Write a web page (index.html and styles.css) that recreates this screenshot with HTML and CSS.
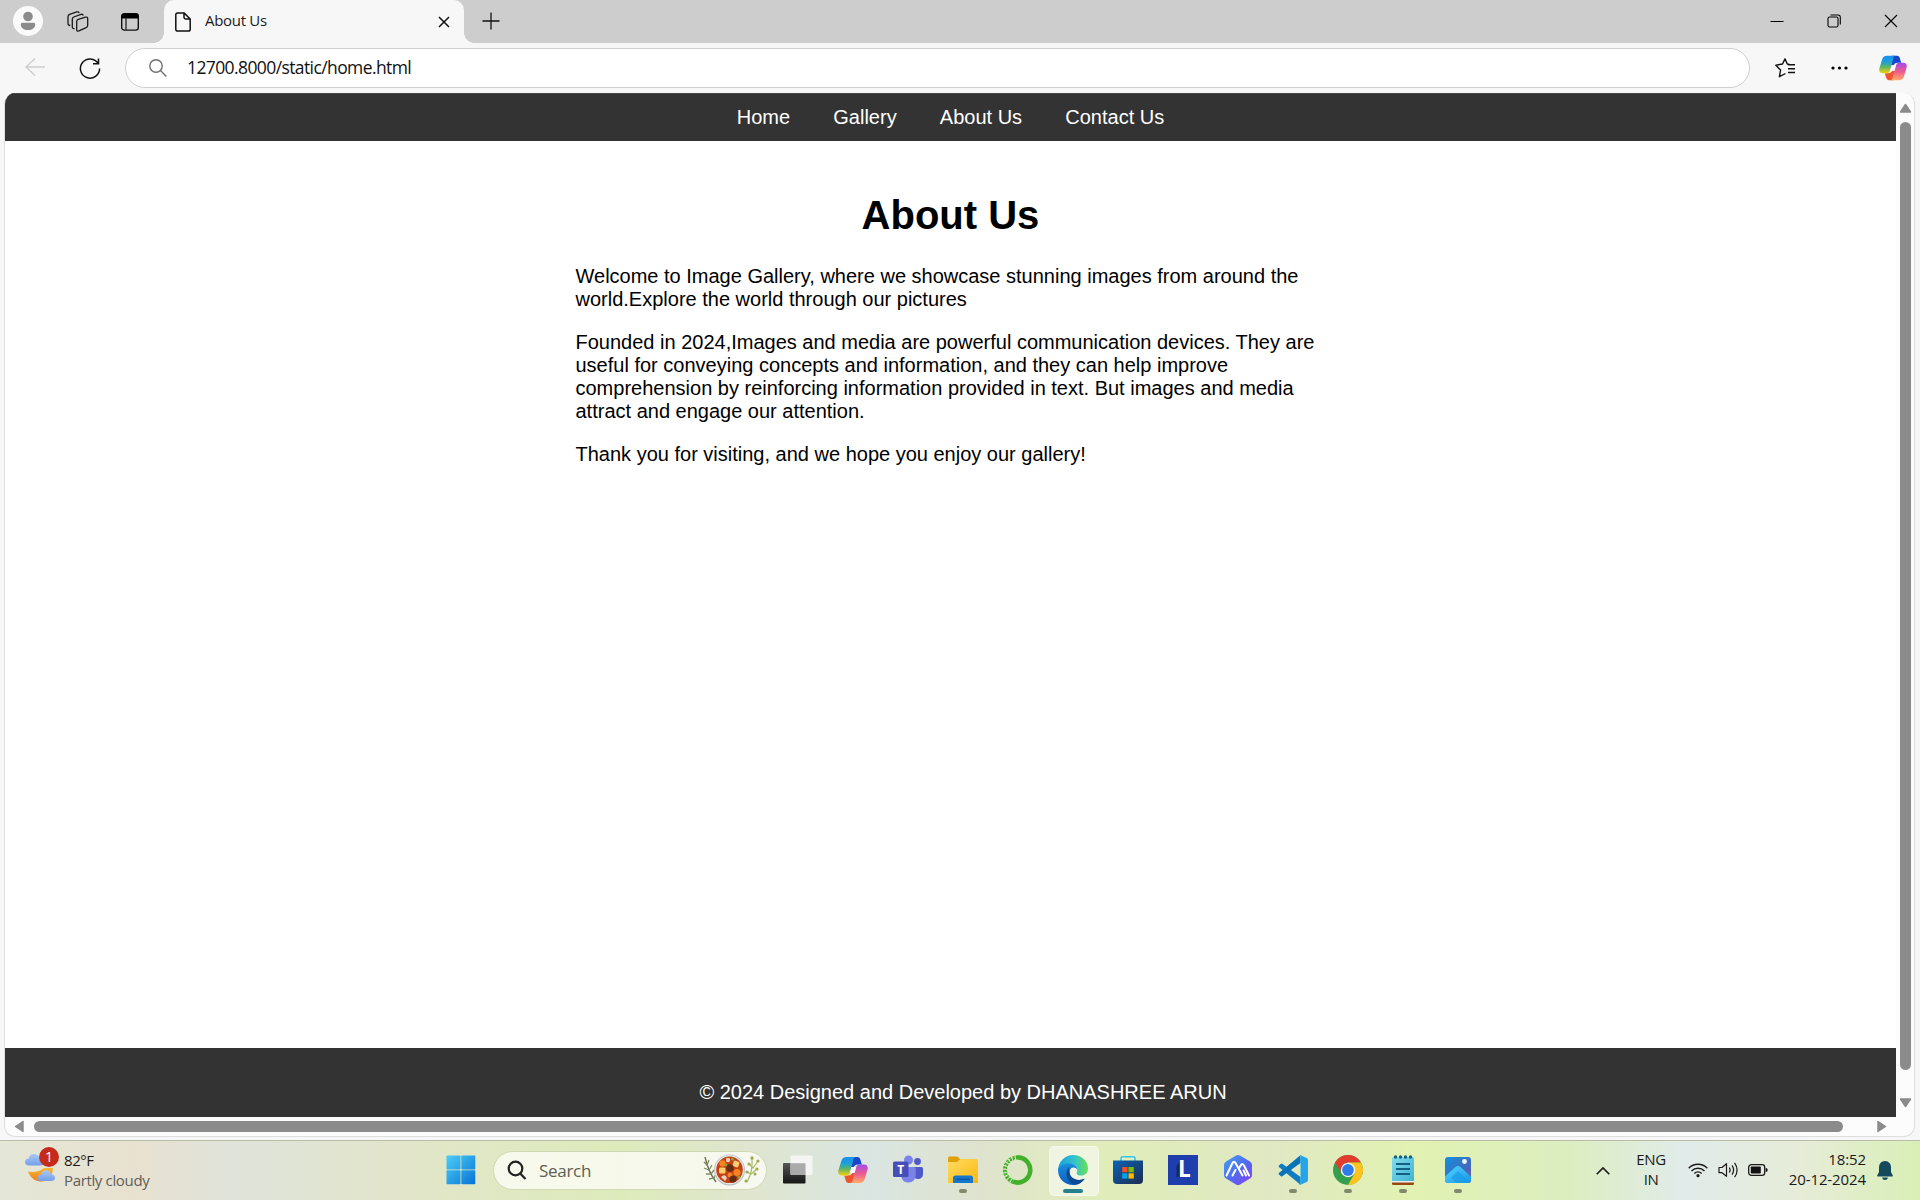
FILE: index.html
```html
<!DOCTYPE html>
<html lang="en">
<head>
<meta charset="utf-8">
<title>About Us</title>
<link rel="stylesheet" href="styles.css">
</head>
<body>
<svg width="0" height="0" class="defs">
  <defs>
    <linearGradient id="cpA" x1="0" y1="0" x2="0" y2="1"><stop offset="0" stop-color="#1b8ff0"/><stop offset=".35" stop-color="#1ba0d8"/><stop offset=".65" stop-color="#62b564"/><stop offset="1" stop-color="#f5d20a"/></linearGradient>
    <linearGradient id="cpB" x1="0" y1="0" x2="0" y2="1"><stop offset="0" stop-color="#a44bea"/><stop offset=".5" stop-color="#ee5a90"/><stop offset="1" stop-color="#ffab6b"/></linearGradient>
    <linearGradient id="win" x1="0" y1="0" x2="1" y2="1"><stop offset="0" stop-color="#4dd0fb"/><stop offset="1" stop-color="#0670d2"/></linearGradient>
    <linearGradient id="winAll" gradientUnits="userSpaceOnUse" x1="0" y1="0" x2="30" y2="30"><stop offset="0" stop-color="#4dd0fb"/><stop offset="1" stop-color="#0670d2"/></linearGradient>
    <linearGradient id="fold" x1="0" y1="0" x2="1" y2="1"><stop offset="0" stop-color="#ffdb61"/><stop offset="1" stop-color="#fcb813"/></linearGradient>
    <linearGradient id="edgeA" x1="0" y1="0" x2="1" y2="0"><stop offset="0" stop-color="#1b9fe0"/><stop offset=".55" stop-color="#34c3cd"/><stop offset="1" stop-color="#66e052"/></linearGradient>
    <linearGradient id="edgeB" x1="0" y1="0" x2="0" y2="1"><stop offset="0" stop-color="#1a8edb"/><stop offset="1" stop-color="#0b5fc0"/></linearGradient>
    <linearGradient id="store" x1="0" y1="0" x2="1" y2="1"><stop offset="0" stop-color="#0a63b5"/><stop offset="1" stop-color="#1d2c50"/></linearGradient>
    <linearGradient id="arc" x1="0" y1="0" x2="1" y2="1"><stop offset="0" stop-color="#48a4ea"/><stop offset=".5" stop-color="#4f6cf2"/><stop offset="1" stop-color="#8a3df0"/></linearGradient>
    <linearGradient id="note" x1="0" y1="0" x2="1" y2="1"><stop offset="0" stop-color="#83dcee"/><stop offset="1" stop-color="#3fb3d3"/></linearGradient>
    <linearGradient id="photo" x1="0" y1="0" x2="1" y2="1"><stop offset="0" stop-color="#1490df"/><stop offset=".6" stop-color="#3f6cbc"/><stop offset="1" stop-color="#7f4fa8"/></linearGradient>
    <linearGradient id="peak" x1="0" y1="0" x2="1" y2="1"><stop offset="0" stop-color="#4fd8ff"/><stop offset="1" stop-color="#1a93e8"/></linearGradient>
    <linearGradient id="tvA" x1="0" y1="0" x2="0" y2="1"><stop offset="0" stop-color="#555"/><stop offset="1" stop-color="#161616"/></linearGradient>
    <linearGradient id="moon" x1="0" y1="0" x2="0" y2="1"><stop offset="0" stop-color="#f7b733"/><stop offset="1" stop-color="#ee7d1c"/></linearGradient>
    <linearGradient id="cloud" x1="0" y1="0" x2="0" y2="1"><stop offset="0" stop-color="#a9c8f8"/><stop offset="1" stop-color="#739fe8"/></linearGradient>
    <symbol id="copilot" viewBox="0 0 30 30">
      <path d="M14 2h5.200c2 0 2.700 1 3.300 3l1.300 4.500h-3.500c-2.500 0-3.500.8-4.600 2.500h-3z" fill="#1848ca"/>
      <path d="M16 28h-5.200c-2 0-2.700-1-3.300-3l-1.300-4.500h3.500c2.500 0 3.500-.8 4.600-2.500h3z" fill="#ee5630"/>
      <path d="M8.500 2h9.300c-1.600.3-2.200 1.500-2.600 3l-3 11.500c-.6 2.500-1.600 4-3.900 4H4C.5 20.500-.2 18 .4 15.500L3.300 6C4.200 3.200 5.500 2 8.500 2z" fill="url(#cpA)"/>
      <path d="M21.500 28h-9.300c1.600-.3 2.200-1.500 2.600-3l3-11.500c.6-2.500 1.600-4 3.900-4H26c3.500 0 4.200 2.500 3.600 5L26.700 24c-.9 2.800-2.200 4-5.200 4z" fill="url(#cpB)"/>
      <path d="M13.500 12h4.700l-1.700 6h-4.700z" fill="#fff" opacity=".8"/>
    </symbol>
  </defs>
</svg>

<div class="browser">
  <header class="tabstrip">
    <div class="strip-tools">
      <svg class="avatar" viewBox="0 0 30 30"><circle cx="15" cy="15" r="15" fill="#fafafa"/><circle cx="15" cy="10.500" r="4.800" fill="#8b8b8b"/><path d="M7.800 18.500c0-1.200.8-1.800 1.800-1.800h10.800c1 0 1.800.6 1.800 1.800 0 3.500-3 5.500-7.200 5.500s-7.200-2-7.200-5.500z" fill="#8b8b8b"/></svg>
      <svg class="workspaces" viewBox="0 0 22 22" fill="none" stroke="#1b1b1b" stroke-width="1.300" stroke-linejoin="round"><path d="M11.200 8.400 18.600 6.200Q20.700 5.700 20.700 7.600V14.200Q20.700 16 19.200 16.600L11.900 19.900Q9.700 20.700 9.700 18.700V10.500Q9.700 8.900 11.200 8.400z"/><path d="M7.600 17.600Q5.300 18 5.300 15.700V8.300Q5.300 6.600 6.800 6L14 3.400Q15.800 2.900 16.300 4.500"/><path d="M3.300 14.500Q1 14.500 1 12.500V5.700Q1 4 2.600 3.400L9.700.9Q11.500.5 12.300 1.900"/></svg>
      <svg class="tabmenu" viewBox="0 0 18 18"><rect x=".7" y=".7" width="16.600" height="16.400" rx="2.600" fill="none" stroke="#111" stroke-width="1.400"/><path d="M.5 5.500V3Q.5.5 3 .5h12Q17.500.5 17.500 3v2.500z" fill="#000"/><path d="M5 5v12" stroke="#222" stroke-width="1.300"/></svg>
    </div>
    <div class="tab">
      <svg class="page-icon" viewBox="0 0 16 20" fill="none" stroke="#111" stroke-width="1.500" stroke-linejoin="round"><path d="M2.500.9H9L15.200 7v10.300q0 1.800-1.800 1.800H2.600Q.8 19.100.8 17.300V2.700Q.8.9 2.500.9zM9 1v4.300Q9 7 10.700 7H15"/></svg>
      <span class="tab-title">About Us</span>
      <svg class="tab-close" viewBox="0 0 12 12"><path d="M1 1l10 10M11 1 1 11" stroke="#111" stroke-width="1.500"/></svg>
    </div>
    <svg class="new-tab" viewBox="0 0 18 18"><path d="M9 .5v17M.5 9h17" stroke="#111" stroke-width="1.300"/></svg>
    <div class="win-buttons">
      <svg viewBox="0 0 14 14"><path d="M.5 7.500h13" stroke="#000"/></svg>
      <svg viewBox="0 0 14 14" fill="none" stroke="#000" stroke-width="1.100"><rect x="1" y="3" width="10" height="10" rx="1.600"/><path d="M3.500 1H11q2.300 0 2.300 2.300V10.500"/></svg>
      <svg viewBox="0 0 14 14"><path d="M1 1l12 12M13 1 1 13" stroke="#000" stroke-width="1.100"/></svg>
    </div>
  </header>

  <div class="toolbar">
    <svg class="back" viewBox="0 0 20 20" fill="none" stroke="#cecece" stroke-width="1.400"><path d="M10 1.500 1 10l9 8.500M1 10h19"/></svg>
    <svg class="reload" viewBox="0 0 22 22" fill="none" stroke="#111" stroke-width="1.500"><path d="M19.200 6.500A9.600 9.600 0 1 0 20.600 11.500M19.500 1.500v5.200H14"/></svg>
    <div class="omnibox">
      <svg class="lens" viewBox="0 0 18 18" fill="none" stroke="#6f6f6f" stroke-width="1.400"><circle cx="7" cy="7" r="6.200"/><path d="M11.500 11.500 17.300 17.500"/></svg>
      <span class="url">12700.8000/static/home.html</span>
    </div>
    <svg class="favorites" viewBox="0 0 20 20" fill="none" stroke="#111" stroke-width="1.400" stroke-linejoin="round"><path d="M14.500 6.500 12.300 6 10 .9 7.500 6 .8 7.200 5.600 12 4.400 18.700 10.500 15.500M13 6.800h7M13 10.700h7M13 14.500h7"/></svg>
    <svg class="dots" viewBox="0 0 17 4"><circle cx="2" cy="2" r="1.600"/><circle cx="8.500" cy="2" r="1.600"/><circle cx="15" cy="2" r="1.600"/></svg>
    <svg class="side-copilot"><use href="#copilot"/></svg>
  </div>

  <div class="viewport">
    <div class="document">
      <nav class="site-nav"><a>Home</a><a>Gallery</a><a>About Us</a><a>Contact Us</a></nav>
      <main class="about">
        <h1>About Us</h1>
        <p>Welcome to Image Gallery, where we showcase stunning images from around the world.Explore the world through our pictures</p>
        <p>Founded in 2024,Images and media are powerful communication devices. They are useful for conveying concepts and information, and they can help improve comprehension by reinforcing information provided in text. But images and media attract and engage our attention.</p>
        <p>Thank you for visiting, and we hope you enjoy our gallery!</p>
      </main>
      <footer class="site-footer">© 2024 Designed and Developed by DHANASHREE ARUN</footer>
    </div>
    <div class="vscroll">
      <svg width="13" height="10" viewBox="0 0 13 10"><path d="M6.500 1.500 11.500 9h-10z"/></svg>
      <i class="vthumb"></i>
      <svg width="13" height="10" viewBox="0 0 13 10"><path d="M6.500 8.500 11.500 1h-10z"/></svg>
    </div>
    <div class="hscroll">
      <svg width="10" height="13" viewBox="0 0 10 13"><path d="M1.500 6.500 9 1.500v10z"/></svg>
      <i class="hthumb"></i>
      <svg width="10" height="13" viewBox="0 0 10 13"><path d="M8.500 6.500 1 1.500v10z"/></svg>
    </div>
  </div>
</div>

<div class="taskbar">
  <div class="weather">
    <svg class="weather-icon" viewBox="0 0 34 36">
      <path d="M3 24.500c5 1 12 .5 16-3.500h9c-.5 8-5 13.500-12 13.500-6 0-11-4-13-10z" fill="url(#moon)"/>
      <path d="M4.500 18.500C1.500 18.500 0 17 0 15s1.500-3.500 3.700-3.600C4.300 8.500 6.500 7 9 7s4.500 1.500 5.300 4c3 0 5 1.500 5 4s-1.500 3.500-4 3.500z" fill="url(#cloud)"/>
      <path d="M16 34c-2.500 0-3.500-1.500-3.500-3.300s1.500-3.200 3.500-3.300c.6-2.700 2.500-4.200 5-4.200s4.300 1.500 5 4c2.500 0 4 1.500 4 3.600S28.500 34 26.500 34z" fill="url(#cloud)"/>
    </svg>
    <span class="badge">1</span>
    <div class="weather-text"><span>82°F</span><span class="muted">Partly cloudy</span></div>
  </div>

  <div class="apps">
    <div class="app start"><svg class="ico" viewBox="0 0 30 30" fill="url(#winAll)"><rect x=".5" y=".5" width="14" height="14" rx=".8"/><rect x="15.300" y=".5" width="14" height="14" rx=".8"/><rect x=".5" y="15.300" width="14" height="14" rx=".8"/><rect x="15.300" y="15.300" width="14" height="14" rx=".8"/></svg></div>
    <div class="search">
      <svg class="search-lens" viewBox="0 0 20 20" fill="none" stroke="#222" stroke-width="2.200"><circle cx="8.500" cy="8.500" r="6.800"/><path d="M13 13.200 18.500 19"/></svg>
      <span>Search</span>
      <svg class="stew" viewBox="0 0 58 32">
        <g fill="none" stroke="#7c8c62" stroke-width="1.300"><path d="M3 3Q6 17 14 28" stroke="#6c6751"/><path d="M2 8l3 3 2-5M2 14l5 2 3-5M4 20l5 0 3-4M7 25l5-1 2-4"/></g>
        <g fill="none" stroke="#a8ba67" stroke-width="1.200"><path d="M50 4Q51 18 45 28M47 10l4 4 5-7M45 18l4 2 6-5"/></g>
        <g fill="#9cab4d"><circle cx="50" cy="4" r="1.700"/><circle cx="56" cy="7" r="1.600"/><circle cx="47" cy="10" r="1.600"/><circle cx="55" cy="15" r="1.600"/><circle cx="45" cy="18" r="1.600"/><circle cx="53" cy="20" r="1.500"/><circle cx="44" cy="27" r="1.500"/></g>
        <circle cx="27.500" cy="16" r="15.500" fill="#bcc1c2"/><circle cx="27.500" cy="15.800" r="14.500" fill="#e8e9e8"/><circle cx="27.500" cy="15.800" r="13.300" fill="#c34112"/>
        <g fill="#f58220"><circle cx="20.500" cy="9.500" r="3.200"/><circle cx="35" cy="18.500" r="3.600"/><circle cx="28" cy="21" r="2.500"/></g>
        <g fill="#f7ce70"><rect x="31" y="7" width="6" height="6" rx="1.500" transform="rotate(20 34 10)"/><rect x="17" y="13.500" width="6.500" height="6" rx="1.500"/></g>
        <g fill="#652c16"><circle cx="28" cy="14" r="3.800"/><circle cx="31" cy="25" r="3.500"/></g>
        <g fill="#e7d3bd"><circle cx="26" cy="6" r="2.200"/><path d="M19 23q4-4 6 1l-2 3z"/></g>
        <g fill="#80a831"><circle cx="30.500" cy="5" r="1.600"/><circle cx="24" cy="11" r="1.400"/><circle cx="37" cy="23" r="1.600"/></g>
      </svg>
    </div>
    <div class="app"><svg class="ico" viewBox="0 0 30 30"><rect y="8" width="22.500" height="20.500" rx="1" fill="url(#tvA)"/><rect x="7.500" y=".5" width="22" height="19.500" rx="1" fill="#f5f5f5" opacity=".95"/><path d="M7.500 8.300h15V20H8.500q-1 0-1-1z" fill="#aaa"/></svg></div>
    <div class="app"><svg class="ico"><use href="#copilot"/></svg></div>
    <div class="app"><svg class="ico" viewBox="0 0 30 30"><circle cx="24.500" cy="6.500" r="3.400" fill="#5059c9"/><path d="M19 12h9.500q1.500 0 1.500 1.500V19c0 3.500-2.500 5-5 5s-5-1.500-6-4z" fill="#5059c9"/><circle cx="15.500" cy="5" r="4.500" fill="#7b83eb"/><path d="M9 12h12q1.700 0 1.700 1.700V20c0 4.500-3 7.500-7.200 7.500S8.200 25 8.200 20z" fill="#7b83eb"/><rect y="6.500" width="15.500" height="15.500" rx="1.500" fill="#464eb8"/><text x="7.700" y="18.800" class="glyph" font-size="12" text-anchor="middle">T</text></svg></div>
    <div class="app running"><svg class="ico" viewBox="0 0 30 30"><path d="M0 3Q0 1.500 1.500 1.500h8L13 5v5H0z" fill="#dea00b"/><path d="M0 7h9l3.500-3H28.500Q30 4 30 5.500V28H0z" fill="url(#fold)"/><path d="M5 28v-5q0-2.500 2.500-2.500h15Q25 20.500 25 23v5z" fill="#1676ca"/><path d="M8.500 24.300h13" stroke="#0b4d8d" stroke-width="1"/></svg></div>
    <div class="app"><svg class="ico" viewBox="0 0 30 30" fill="none" stroke="#43b02a"><path d="M15 2.400A12.600 12.600 0 1 1 10 26.700" stroke-width="4.600"/><path d="M15 2.400A12.600 12.600 0 0 0 10 26.700" stroke-width="4.200" stroke-dasharray="2.300 1"/><path d="M13 4.500A11 11 0 0 0 8 23.500M10 2A14 14 0 0 0 4 22" stroke="#e2edc5" stroke-width=".8" stroke-dasharray="2 1.500"/></svg></div>
    <div class="app running active"><svg class="ico" viewBox="0 0 30 30"><path d="M15 0C23.500 0 30 6 30 13.500 30 18 27 20.500 23 20.500c-3.500 0-5-1.500-4-3.500C20.500 14 18 9.500 12.500 9.500 6 9.500 1 13 0 16 0 7 6.500 0 15 0z" fill="url(#edgeA)"/><path d="M0 15C1 11 6 8.500 10.500 8.500c5 0 8.500 2.500 9 6.500-2.500-4-8-3-8 2.500 0 6.500 8 10 15 6C23.500 28 19.500 30 15 30 6.500 30 0 23.500 0 15z" fill="url(#edgeB)"/><path d="M11 12c-5 5-2.500 16 6 17.800 4-.3 7.500-2.500 9.900-6C19 27 12 23 11.500 17z" fill="#0c4a96"/></svg></div>
    <div class="app"><svg class="ico" viewBox="0 0 30 30"><path d="M8 7V3.500Q8 1.800 9.700 1.800h10.600Q22 1.800 22 3.500V7" fill="none" stroke="#35c5f4" stroke-width="1.600"/><path d="M0 5.500h30V25q0 4-4 4H4q-4 0-4-4z" fill="url(#store)"/><path d="M9.200 12h5.300v5.300H9.200z" fill="#f25022"/><path d="M15.500 12h5.300v5.300h-5.300z" fill="#7fba00"/><path d="M9.200 18.300h5.300v5.300H9.200z" fill="#00a4ef"/><path d="M15.500 18.300h5.300v5.300h-5.300z" fill="#ffb900"/></svg></div>
    <div class="app"><svg class="ico" viewBox="0 0 30 30"><path d="M0 0h30v30H0z" fill="#1f3eae"/><path d="M8.500 11 12 6v16h-3.500z" fill="#122a61"/><text x="10" y="22.300" class="glyph" font-size="22.500">L</text></svg></div>
    <div class="app"><svg class="ico" viewBox="0 0 30 30"><path d="M13 .6q2-1.100 4 0l10 5.800q2 1.100 2 3.400v10.400q0 2.300-2 3.400L17 29.400q-2 1.100-4 0L3 23.600q-2-1.100-2-3.400V9.800Q1 7.500 3 6.400z" fill="url(#arc)"/><path d="M3.500 20.500 9.500 8Q11 5.500 12.500 8L19.500 20.500M9.500 20.500 12.500 15M16.500 12.500 18 10Q19.500 8 21 10.500L26 20.500M20.500 15.500 23 20.500" fill="none" stroke="#fff" stroke-width="2" stroke-linecap="round" stroke-linejoin="round"/></svg></div>
    <div class="app running"><svg class="ico" viewBox="0 0 30 30"><path d="M1 10.500 3 8.700q.6-.5 1.300 0L22.500 22v7.700L.9 11.900q-.8-.7.1-1.400z" fill="#0f7cc4"/><path d="M1 19.500 3 21.300q.6.500 1.300 0L22.500 8V.3L.9 18.100q-.8.700.1 1.400z" fill="#0873b8"/><path d="M22.500.2 28.700 3Q30 3.700 30 5v20q0 1.300-1.300 2l-6.200 2.800q-1 .2-1.600-.5 1.600.5 1.600-1.300V2Q22.500.3 21 .7q.6-.7 1.500-.5z" fill="#25a5ec"/></svg></div>
    <div class="app running"><svg class="ico" viewBox="0 0 30 30"><circle cx="15" cy="15" r="15" fill="#34a04e"/><path d="M2 7.500A15 15 0 0 1 28 7.500H15L9 18.500z" fill="#e33b2e"/><path d="M15 7.500h13A15 15 0 0 1 15 30l6.500-11.300z" fill="#fcc31e"/><circle cx="15" cy="15" r="7.200" fill="#fff"/><circle cx="15" cy="15" r="5.900" fill="#2f7bea"/></svg></div>
    <div class="app running"><svg class="ico" viewBox="0 0 30 30"><path d="M4 27h22v1.500q0 1.500-1.500 1.500h-19Q4 30 4 28.500z" fill="#984713"/><path d="M4 25h22v2.500H4z" fill="#eee"/><path d="M4 3.500Q4 2 5.500 2h19Q26 2 26 3.500V26H4z" fill="url(#note)"/><g fill="#15607c"><circle cx="7.500" cy="2" r="1.700"/><circle cx="12.500" cy="2" r="1.700"/><circle cx="17.500" cy="2" r="1.700"/><circle cx="22.500" cy="2" r="1.700"/></g><path d="M8 9h14M8 14h14M8 19h14" stroke="#115f83" stroke-width="2"/></svg></div>
    <div class="app running"><svg class="ico" viewBox="0 0 30 30"><rect x="2" y="2" width="26" height="26" rx="3" fill="url(#photo)"/><path d="M2 21.500 12.500 12q2.500-2 5 0L28 21.500V25q0 3-3 3H5q-3 0-3-3z" fill="url(#peak)"/><path d="M13.500 28 8 22.500 15 16l12 11q-1 1-2 1z" fill="#169be5" opacity=".65"/><circle cx="21.500" cy="6.500" r="2.400" fill="#f2f8ff"/></svg></div>
  </div>

  <div class="tray">
    <svg class="chevron" viewBox="0 0 14 8"><path d="M.7 7.300 7 1l6.300 6.300" fill="none" stroke="#1b1b1b" stroke-width="1.600"/></svg>
    <div class="lang"><span>ENG</span><span>IN</span></div>
    <svg class="wifi" viewBox="0 0 20 16" fill="none" stroke="#1b1b1b" stroke-width="1.400"><path d="M.7 6.200a13 13 0 0 1 18.600 0M3.500 8.900a9.300 9.300 0 0 1 13 0M6.300 11.500a5.500 5.500 0 0 1 7.400 0"/><circle cx="10" cy="13.700" r="1.600" fill="#1b1b1b" stroke="none"/></svg>
    <svg class="volume" viewBox="0 0 20 16" fill="none" stroke="#1b1b1b" stroke-width="1.200" stroke-linejoin="round"><path d="M1 5.500h3L8.500 1.700v12.600L4 10.700H1zM11.300 5.500q1.700 2.500 0 5M14 3.300q3.200 4.700 0 9.400M16.600.8q5 7.200 0 14.400"/></svg>
    <svg class="battery" viewBox="0 0 20 12"><rect x=".7" y=".7" width="16" height="10.600" rx="2.600" fill="none" stroke="#1b1b1b" stroke-width="1.300"/><rect x="2.800" y="2.600" width="10" height="6.800" rx=".6" fill="#111"/><path d="M17.700 4q2 .2 2 2t-2 2z" fill="#111"/></svg>
    <div class="clock"><span>18:52</span><span>20-12-2024</span></div>
    <svg class="bell" viewBox="0 0 16 19" fill="#154a5d"><path d="M8 0q5.700.3 6 6v5l1.800 3.500q.3 1-.8 1H1q-1.100 0-.8-1L2 11V6Q2.300.3 8 0zM5 16.500h6Q10.500 19 8 19t-3-2.500z"/></svg>
  </div>
</div>
</body>
</html>
```
FILE: styles.css
```css
* { box-sizing: border-box; }
body { margin: 0; width: 1920px; height: 1200px; overflow: hidden; font-family: "Open Sans", "Noto Sans", sans-serif; color: #1b1b1b; background: #f7f7f7; }
svg { display: block; flex: none; overflow: visible; }
.defs { position: absolute; }
.browser { height: 1140px; background: #f7f7f7; display: flex; flex-direction: column; }

/* Tab strip */
.tabstrip { height: 43px; flex: none; background: #cdcdcd; display: flex; align-items: center; }
.strip-tools { width: 164px; padding-left: 13px; display: flex; align-items: center; }
.avatar { width: 30px; height: 30px; margin-top: -1px; }
.workspaces { width: 22px; height: 22px; margin-left: 24px; }
.tabmenu { width: 18px; height: 18px; margin-left: 32px; }
.tab { position: relative; width: 300px; height: 43px; background: #f7f7f7; border-radius: 10px 10px 0 0; display: flex; align-items: center; padding: 0 14px 0 11px; }
.tab::before, .tab::after { content: ""; position: absolute; bottom: 0; width: 10px; height: 10px; }
.tab::before { left: -10px; background: radial-gradient(circle at 0 0, transparent 9.500px, #f7f7f7 10px); }
.tab::after { right: -10px; background: radial-gradient(circle at 100% 0, transparent 9.500px, #f7f7f7 10px); }
.page-icon { width: 16px; height: 20px; }
.tab-title { flex: 1; margin-left: 14px; font-size: 15px; line-height: 20px; letter-spacing: -.3px; margin-top: -4px; }
.tab-close { width: 12px; height: 12px; }
.new-tab { width: 18px; height: 18px; margin-left: 18px; margin-top: -2px; }
.win-buttons { margin-left: auto; display: flex; gap: 43px; padding-right: 22px; }
.win-buttons svg { width: 14px; height: 14px; margin-top: -1px; }

/* Address bar */
.toolbar { height: 50px; flex: none; display: flex; align-items: center; padding-left: 25px; }
.back { width: 20px; height: 20px; margin-top: -2px; }
.reload { width: 22px; height: 22px; margin-left: 34px; margin-top: -1px; }
.omnibox { width: 1625px; height: 40px; margin-left: 24px; border: 1px solid #cfcfcf; border-radius: 20px; background: #fff; display: flex; align-items: center; padding-left: 23px; }
.lens { width: 18px; height: 18px; }
.url { margin-left: 20px; margin-top: -2px; font-size: 17.500px; letter-spacing: -.6px; color: #111; white-space: nowrap; }
.favorites { width: 20px; height: 20px; margin-left: 25px; }
.dots { width: 17px; height: 4px; margin-left: 36px; }
.side-copilot { width: 28px; height: 28px; margin-left: 31px; }

/* Page area with its scrollbars */
.viewport { width: 1911px; height: 1044px; margin-left: 4px; border: 1px solid #dedede; border-top: 0; border-radius: 11px; overflow: hidden; background: #fcfcfc; display: grid; grid-template-columns: 1891px 1fr; grid-template-rows: 1024px 1fr; }
.document { background: #fff; display: flex; flex-direction: column; font: 20px/23px "Liberation Sans", Arial, sans-serif; color: #000; }
.site-nav { height: 48px; flex: none; background: #333; color: #fff; display: flex; justify-content: center; align-items: center; gap: 43.200px; border-top: 1px solid #484848; }
.about { flex: 1; width: 750px; margin: 0 auto; padding-top: 52px; }
.about h1 { margin: 0 0 27px; text-align: center; font-size: 40px; line-height: 45px; }
.about p { margin: 0 0 20px; }
.site-footer { height: 69px; flex: none; background: #333; color: #fff; text-align: center; padding: 33px 0 0 25px; }
.vscroll { display: flex; flex-direction: column; align-items: center; padding-top: 10px; fill: #8b8b8b; padding-left: 1px; }
.vscroll path, .hscroll path { stroke: #8b8b8b; stroke-linejoin: round; stroke-width: 1.500px; }
.vthumb { width: 11px; height: 948px; border-radius: 6px; background: #8b8b8b; margin: 9px 0 28px; flex: none; }
.hscroll { grid-column: 1 / -1; display: flex; align-items: center; padding-left: 9px; padding-bottom: 1px; fill: #8b8b8b; }
.hthumb { width: 1809px; height: 11px; border-radius: 6px; background: #8b8b8b; margin: 0 34px 0 10px; }

/* Taskbar */
.taskbar { height: 60px; display: flex; border-top: 1px solid #b8bda8; background: linear-gradient(90deg, #e4e7d7 0, #e8e1d0 130px, #dfe3da 235px, #e2e5ca 400px, #ddebbb 620px, #dfe5cf 750px, #dae5e2 870px, #dfe3ce 980px, #e0edb9 1110px, #e0e8c3 1270px, #e2f2b2 1410px, #dceec0 1570px, #e1ebea 1685px, #e6ecd8 1800px, #d9efb6 1920px); }
.weather { position: relative; width: 433px; padding: 3px 0 0 25px; display: flex; }
.weather-icon { width: 34px; height: 36px; margin-top: 3px; }
.badge { position: absolute; left: 39px; top: 6px; width: 20px; height: 20px; border-radius: 50%; background: #c42b1c; color: #fff; font-size: 14px; line-height: 20px; text-align: center; }
.weather-text { margin-left: 5px; display: flex; flex-direction: column; font-size: 15px; line-height: 20px; padding-top: 6px; letter-spacing: -.45px; }
.weather-text .muted { color: #5f5f5a; letter-spacing: -.35px; }
.apps { display: flex; align-items: center; }
.app { width: 55px; height: 60px; display: grid; place-items: center; position: relative; margin-top: -1px; }
.start { padding-left: 1px; }
.ico { width: 30px; height: 30px; }
.running::after { content: ""; position: absolute; bottom: 7px; left: 24px; width: 8px; height: 4px; border-radius: 2px; background: #828a6c; }
.active::before { content: ""; position: absolute; left: 4px; top: 6px; width: 48px; height: 48px; border-radius: 5px; background: rgba(255,255,255,.5); border: 1px solid rgba(255,255,255,.35); }
.active .ico { position: relative; }
.active::after { left: 18px; width: 20px; background: #27808c; }
.glyph { fill: #fff; font-family: "Open Sans", sans-serif; font-weight: 700; line-height: 1; }
.search { width: 274px; height: 39px; margin: -1px 3px 0 5px; border-radius: 20px; background: rgba(252,253,246,.8); border: 1px solid #ced9b3; display: flex; align-items: center; padding-left: 13px; font-size: 17px; color: #5d5f57; }
.search-lens { width: 20px; height: 20px; margin-right: 12px; }
.search span { letter-spacing: -.3px; }
.stew { width: 58px; height: 32px; margin-left: auto; margin-right: 6px; }
.tray { margin-left: auto; display: flex; align-items: center; padding-right: 27px; font-size: 15px; line-height: 20px; letter-spacing: -.4px; }
.chevron { width: 14px; height: 8px; }
.lang { width: 42px; margin: -3px 0 0 20px; display: flex; flex-direction: column; align-items: center; }
.wifi { width: 20px; height: 16px; margin-left: 16px; margin-top: -1px; }
.volume { width: 20px; height: 16px; margin-left: 10px; margin-top: -1px; }
.battery { width: 20px; height: 12px; margin-left: 10px; margin-top: -1px; }
.clock { width: 78px; margin: -4px 0 0 20px; display: flex; flex-direction: column; align-items: flex-end; white-space: nowrap; letter-spacing: -.1px; }
.bell { width: 16px; height: 19px; margin-left: 11px; }
```
